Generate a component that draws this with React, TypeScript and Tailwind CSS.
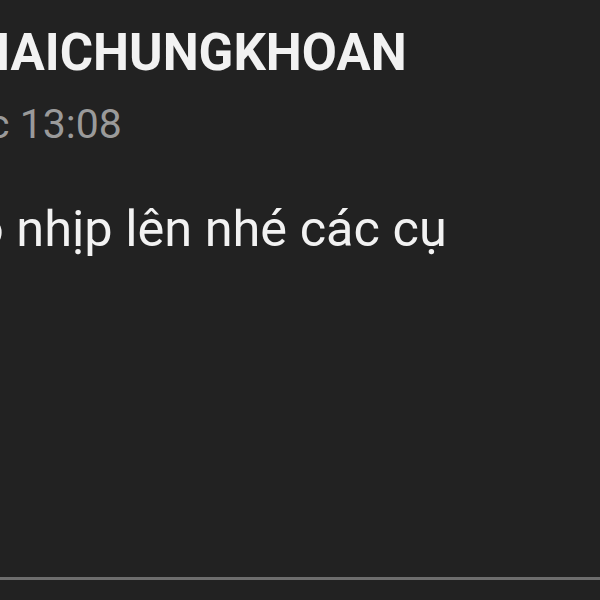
export default function App() {
  return (
    <div className="w-[600px] h-[600px] overflow-hidden bg-[#222222] flex flex-col font-['Roboto',sans-serif]">
      <div className="flex flex-col pt-[27px]">
        <div className="ml-[-26px] whitespace-nowrap text-[51px] leading-none font-bold text-[#f2f2f2]">
          HAICHUNGKHOAN
        </div>
        <div className="ml-[-12px] mt-[26px] whitespace-nowrap text-[41px] leading-none text-[#9a9a9a]">
          c 13:08
        </div>
        <div className="ml-[-25px] mt-[59px] whitespace-nowrap text-[50.5px] leading-none text-[#f2f2f2]">
          o nhịp lên nhé các cụ
        </div>
      </div>
      <div className="mt-auto mb-[20px] h-[3px] bg-[#6e6e6e]" />
    </div>
  );
}
